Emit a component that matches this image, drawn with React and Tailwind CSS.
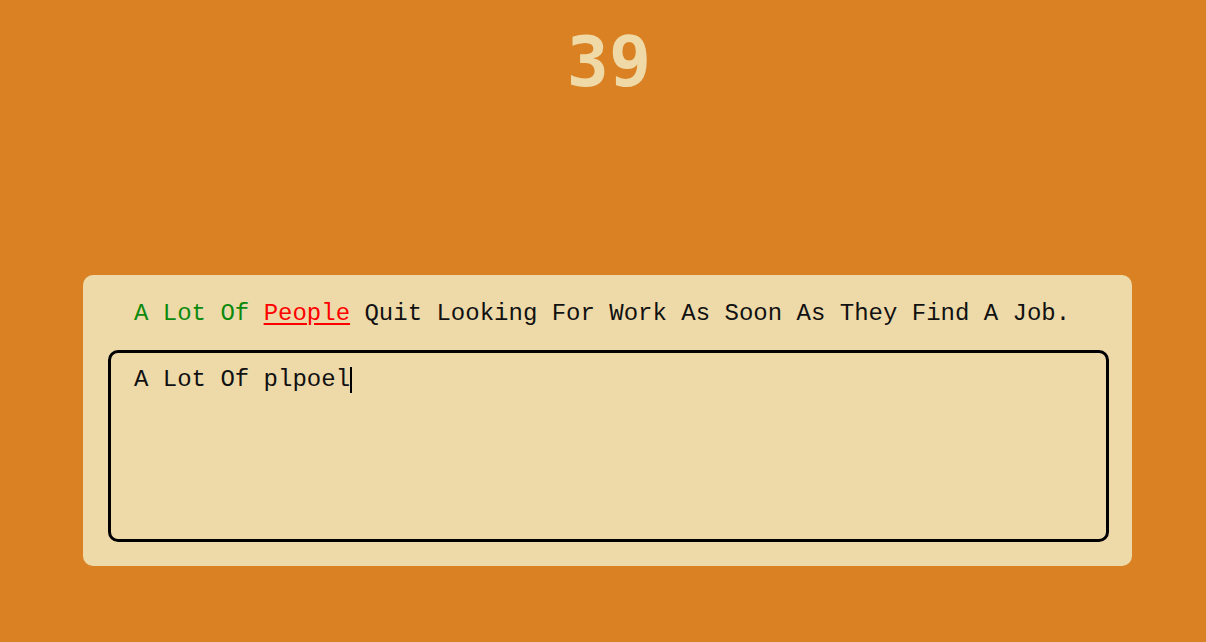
export default function App() {
  const words = "Quit Looking For Work As Soon As They Find A Job.";
  return (
    <div className="w-[1206px] h-[642px] bg-[#da8223] overflow-hidden">
      <div className="h-[275px] pt-[22px] pl-[12px] text-center">
        <div className="text-[70px] leading-[80px] font-bold text-[#eed9a7]" style={{ fontFamily: '"DejaVu Sans Mono", monospace' }}>39</div>
      </div>
      <div className="ml-[83px] w-[1049px] rounded-[10px] bg-[#eedaa9] pl-[25px] pr-[23px] pt-[21px] pb-[24px]" style={{ fontFamily: '"Courier New", "Liberation Mono", monospace' }}>
        <div className="text-[24px] leading-[36px] pl-[26px] text-[#111] whitespace-pre">
          <span className="text-[#0d8a0d]">A Lot Of </span>
          <span className="text-[#ff0000] underline decoration-[#ff0000] underline-offset-[3px]">People</span>
          <span> {words}</span>
        </div>
        <div className="mt-[18px] h-[192px] rounded-[10px] border-[3px] border-black px-[23px] pt-[9px]">
          <div className="text-[24px] leading-[36px] text-[#111] whitespace-pre flex items-center">
            <span>A Lot Of plpoel</span>
            <span className="inline-block w-[2px] h-[26px] bg-black"></span>
          </div>
        </div>
      </div>
    </div>
  );
}
